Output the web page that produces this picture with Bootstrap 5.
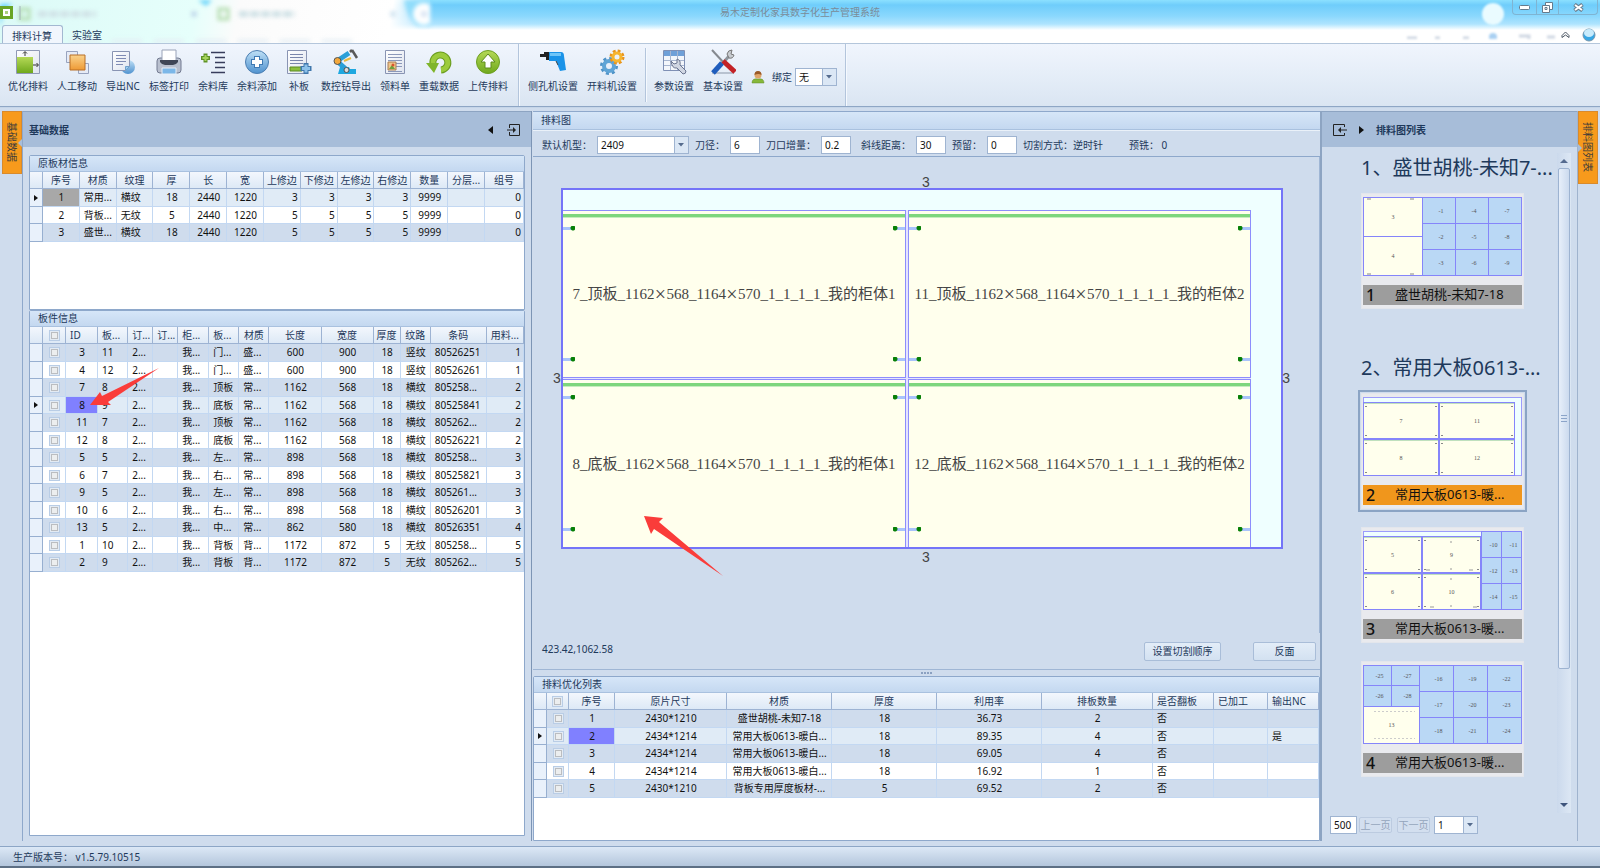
<!DOCTYPE html>
<html lang="zh-CN">
<head>
<meta charset="utf-8">
<meta name="viewport" content="width=device-width, initial-scale=1">
<title>易木定制化家具数字化生产管理系统</title>
<link href="https://cdn.jsdelivr.net/npm/bootstrap@5.3.0/dist/css/bootstrap.min.css" rel="stylesheet">
<style>
:root{--ink:#1e395b;--pane:#cfdced;--line:#8ea8cb;--head:#a7bdd9;--orange:#f79a1c}
body{font-family:"Noto Sans","Noto Sans CJK SC",sans-serif;font-size:10px;line-height:16px;color:var(--ink);background:var(--pane);height:100vh;min-height:700px;overflow:hidden}
button,input,select{font:inherit;color:inherit}
/* title bar */
.glass{height:43px;overflow:hidden;background:linear-gradient(180deg,#8be0ff 0,#6fcdfb 5px,#8ad8fd 16px,#aee4fe 24px,#fff 30px)}
.glass-haze{left:0;top:0;width:430px;height:43px;background:linear-gradient(100deg,#dcfaf7 0,#e6fffb 45%,#fbfbfb 55%,#fff 90%,transparent)}
.glass-haze svg{filter:blur(2px)}
.app-title{color:#7b8c99;line-height:24px}
.orb{width:22px;height:22px;border-radius:50%;background:#eafbff;filter:blur(1px)}
.win-btns{border:1px solid #7fb4d2;border-top:0;border-radius:0 0 4px 4px;height:15px}
.win-btns button{border:0;background:transparent;height:14px;padding:0;display:flex;align-items:center;justify-content:center}
.win-btns button+button{border-left:1px solid #7fb4d2}
.app-tabs{left:2px;bottom:0}
.app-tabs a{display:block;color:var(--ink);text-decoration:none;height:18px;line-height:20px;padding:0 10px 0 9px}
.app-tabs a.active{background:#f1f6fd;border:1px solid #a3b8d1;border-bottom:0;border-radius:3px 3px 0 0}
/* ribbon */
.ribbon{height:64px;background:linear-gradient(#f0f5fd,#e3ecf7 60%,#dae5f2);border-top:1px solid #b4c6db;border-bottom:1px solid #8ea6c5}
.tool{border:0;background:transparent;padding:5px 4px 0;height:62px;display:flex;flex-direction:column;align-items:center;min-width:34px;white-space:nowrap}
.tool svg{width:26px;height:26px;margin-bottom:3px}
.rule{width:1px;background:#b3c5dc;box-shadow:1px 0 #f5f9fe}
.rule.mid{margin:0 5px 0 6px}
/* workspace */
.work{min-height:0;padding:3px 0 5px;border-top:1px solid #c5d5e8}
.rail{width:22px}
.side-tab{width:20px;background:var(--orange);border:1px solid #d98a2b;padding:10px 0 11px;writing-mode:vertical-rl;text-orientation:sideways;line-height:18px;color:#3b3a3a;position:relative}
.side-tab::after{content:"";position:absolute;top:27px;border:4px solid transparent}
.side-tab.to-right::after{right:-1px;border-right-color:var(--head);border-left-width:0}
.side-tab.to-left::after{left:-1px;top:32px;border-left-color:var(--head);border-right-width:0}
.pane-left{width:510px;border-left:1px solid var(--line);border-right:1px solid #7d95b5}
.pane-right{width:258px;border-left:2px solid #8da4c2;border-right:1px solid #9fb3ce}
.pane-head{height:36px;background:var(--head);font-weight:700;border-top:1px solid #8da4c2}
.group{border:1px solid var(--line);border-radius:2px 2px 0 0;background:#fff}
.group-head{height:16px;line-height:15px;padding-left:8px;background:linear-gradient(#d6e6f8,#c4d8f0);border-bottom:1px solid #a9c1df}
.grp-stock{flex:0 0 155px}
/* data grids */
.grid{table-layout:fixed;width:100%;border-collapse:separate;border-spacing:0;color:#111}
.grid th,.grid td{padding:0 3px 0 4px;line-height:15px;white-space:nowrap;overflow:hidden;text-align:center;vertical-align:middle}
.grid th{height:17px;font-weight:400;color:var(--ink);padding:0 1px;background:linear-gradient(#f3f7fd,#dde9f6);border-right:1px solid #9db3d3;border-bottom:1px solid #9db3d3}
.grid td{height:18px;background:var(--pane);border-right:1px solid #c3d8f2;border-bottom:1px solid #c3d8f2}
.grid tr:nth-child(even) td{height:17px;background:#fff}
.grid tr.focused td{background:#e0ebf6}
.grid tbody td.mark-col{background:#e9f1fb;border-color:#97afd0;padding:0}
.grid td.l,.grid th.l{text-align:left;padding:0 0 0 4px}
.grid td.r{text-align:right;padding-right:2px}
.grid tbody td.pick{background:#8080ff}
.grid tbody td.pick-off{background:#a8a8a8}
.ptr{width:0;height:0;border:3px solid transparent;border-left:4px solid #111;border-right:0;margin:0 auto}
.tick{appearance:none;width:11px;height:11px;display:block;margin:0 auto;border:1px solid #b9cde6;background:#eceeef;box-shadow:inset 0 0 0 1px #e3ebf4,inset 0 0 0 2px #bbbdc0}
/* fields */
.field{border:1px solid #9fb4d1;background:#fff;color:#111;height:18px;padding:0 3px;border-radius:0}
.num{width:30px}
.drop{appearance:none;padding-right:16px;background:#fff url("data:image/svg+xml,%3Csvg xmlns='http://www.w3.org/2000/svg' width='14' height='18'%3E%3Cpath fill='%23dbe7f5' d='M0 0h14v18H0z'/%3E%3Cpath fill='%239fb4d1' d='M0 0h1v18H0z'/%3E%3Cpath fill='%23566c8e' d='M4 6h6l-3 3.500z'/%3E%3C/svg%3E") right top no-repeat}
.params{height:27px;padding:2px 0 0 9px;border-top:1px solid #eaf1f9;border-bottom:1px solid var(--line);gap:6px}
.params label{margin-right:5px}
.push{border:1px solid #a9bdd8;border-radius:2px;background:linear-gradient(#e3edf8,#d3e1f1);height:19px;padding:0;line-height:16px}
.push:disabled{color:#93a4bb;background:#d3dfef;border-color:#bccbe0;height:16px;line-height:13px;width:33px}
/* nesting drawing */
.chart{padding:31px 36px 0 28px;border-right:1px solid #9fb6d5;min-height:0}
.board{height:361px;border:2px solid #7474f8;background:#efffff;padding:20px 30px 0 0;position:relative}
.parts{display:grid;grid-template-columns:1fr 1fr;grid-template-rows:1fr 1fr;gap:1px 2px;height:100%;background:#e4e4ff}
.part{position:relative;background:#ffffed;border:1px solid #8d8dfc;border-left-width:0;font:15px/20px "Liberation Serif","Noto Sans CJK SC",serif;color:#444;display:flex;align-items:center;justify-content:center;white-space:nowrap;overflow:hidden}
.part:nth-child(even){border-left-width:1px}
.part:nth-child(n+3){border-bottom-width:0}
.part::before{content:"";position:absolute;left:0;right:0;top:3px;height:4px;background:#7dd67d;border-bottom:1px solid #c6ecbf}
.part i{display:inline-block;width:12px;text-align:center;font-style:normal;font-size:20px;line-height:16px;vertical-align:-2px}
.hole{position:absolute;width:12px;height:5px;background:radial-gradient(circle at 10px 2px,#078007 2px,transparent 3px),linear-gradient(#a9c3fb,#a9c3fb) 0 1px/9px 3px no-repeat}
.hole.e{right:0;transform:scaleX(-1)}.hole.w{left:0}.hole.n{top:15px}.hole.s{bottom:15px}
.trim{position:absolute;font:14px/16px "Liberation Sans",sans-serif;color:#444}
.trim.t{top:-16px;left:50%}.trim.b{bottom:-18px;left:50%}.trim.a{left:-10px;top:180px}.trim.z{right:-9px;top:180px}
.arrow{position:absolute;pointer-events:none;overflow:visible}
.foot{height:37px;padding:0 4px 0 9px;border-bottom:1px solid #9fb6d5}
.splitter{height:6px}
.splitter span{width:2px;height:2px;background:#8ba1c1}
.grp-list{flex:0 0 165px}
/* thumbnails */
.sheet-title{font-size:20px;line-height:24px;font-weight:400;padding-left:39px;margin:0;white-space:nowrap}
.sheet{width:163px;height:116px;margin:0 0 18px 39px;background:#e9eaee;border:1px solid #e3e6ec;padding:3px 1px;color:#111}
.sheet svg{display:block;margin:0 auto 8px;width:159px;height:80px}
.sheet text{font:6px "Liberation Serif",serif;fill:#555;text-anchor:middle}
.sheet figcaption{background:#9d9d9d;height:20px;line-height:19px;font-size:13px;display:grid;grid-template-columns:32px 1fr}
.sheet figcaption b{font-size:16px;line-height:20px;font-weight:500;padding-left:3px}
.sheet.on{outline:2px solid #8ba4c4;outline-offset:1px}
.sheet.on figcaption{background:#f0961c}
.scroll{width:14px;background:linear-gradient(90deg,#cbd9ec,#dce7f4);margin:6px 6px 0 0}
.thumb-bar{height:501px;width:12px;border:1px solid #9db3d1;border-radius:2px;background:linear-gradient(90deg,#e7effa,#cbdaee)}
.tri-u,.tri-d{border:4px solid transparent;height:0;width:0}
.tri-u{border-bottom:4px solid #556b8f;border-top:0}
.tri-d{border-top:4px solid #3f557c;border-bottom:0}
.pager{height:28px;padding:0 0 4px 8px}
.status{height:22px;border-top:1px solid #8da6c6;border-bottom:2px solid #5d6f84;background:linear-gradient(#dce8f6,#b4c6dc);padding-left:13px;line-height:21px}
</style>
</head>
<body class="d-flex flex-column">
<svg class="position-absolute" width="0" height="0" aria-hidden="true">
 <defs>
  <linearGradient id="gGreen" x2="0" y2="1"><stop stop-color="#b5d957"/><stop offset="1" stop-color="#6fa81c"/></linearGradient>
  <linearGradient id="gBlue" x2="0" y2="1"><stop stop-color="#bfe0f6"/><stop offset="1" stop-color="#4f92cf"/></linearGradient>
  <linearGradient id="gOr" x2="0" y2="1"><stop stop-color="#fad28b"/><stop offset="1" stop-color="#ee9a35"/></linearGradient>
  <linearGradient id="gPaper" x2="1" y2="1"><stop stop-color="#fff"/><stop offset="1" stop-color="#dfe4ef"/></linearGradient>
 </defs>
</svg>

<header class="glass position-relative flex-shrink-0">
 <div class="glass-haze position-absolute">
  <svg width="430" height="43">
   <path d="M0 28Q4 6 14 4H0z" fill="#66d3fb"/><path d="M198 0h14l-6 6z" fill="#66d3fb"/><path d="M404 0h26v26h-12q-10-6-14-26z" fill="#8fdcfb"/>
   <g fill="none" stroke="#b3dcae" stroke-width="3"><rect x="20" y="9" width="9" height="10"/><rect x="219" y="9" width="9" height="10"/></g>
   <path d="M38 14h58M239 14h56" stroke="#cfe1e6" stroke-width="6" stroke-dasharray="9 2"/><circle cx="194" cy="14" r="3" fill="#bfd6ea"/><circle cx="393" cy="14" r="3" fill="#cfe2f0"/>
   <path d="M70 41h290" stroke="#e4edf4" stroke-width="3" stroke-dasharray="30 12"/><circle cx="424" cy="14" r="11" fill="#fff"/><circle cx="424" cy="14" r="3" fill="#d3e0f2"/>
  </svg>
 </div>
 <svg class="position-absolute" style="left:0;top:6px" width="22" height="14"><path d="M0 0h13v13H0z" fill="#69a524"/><path d="M3 3h7v7H3z" fill="#fff"/><path d="M5 5h3v3H5z" fill="#a9cf7c"/><path d="M20 0v14" stroke="#a3b3ba"/></svg>
 <div class="app-title text-center position-relative">易木定制化家具数字化生产管理系统</div>
 <div class="position-absolute d-flex" style="right:2px;top:0">
  <div class="orb me-2" style="margin-top:3px"></div>
  <div class="win-btns d-flex">
   <button aria-label="最小化" style="width:23px"><svg width="11" height="6"><rect x=".5" y="1.500" width="10" height="4" rx="1" fill="#fff" stroke="#667b8c"/></svg></button>
   <button aria-label="还原" style="width:22px"><svg width="11" height="11" fill="#fff" stroke="#667b8c"><path d="M3.500.500h7v7h-7z"/><path d="M.500 3.500h7v7h-7z"/><path d="M3 5.500h2v2H3z"/></svg></button>
   <button aria-label="关闭" style="width:39px"><svg width="11" height="9"><path d="M1.500 1.500l8 6M9.500 1.500l-8 6" stroke="#667b8c" stroke-width="4"/><path d="M2 2l7 5M9 2L2 7" stroke="#fff" stroke-width="2"/></svg></button>
  </div>
 </div>
 <div class="position-absolute d-flex align-items-center" style="right:4px;bottom:1px">
  <svg width="150" height="8" style="filter:blur(1px)"><path d="M0 7h10M28 7h5M56 7h6M112 5h10v3M140 6h8" fill="none" stroke="#d0d8e3" stroke-width="3"/><circle cx="86" cy="6" r="4" fill="#a9d0f2"/></svg>
  <svg width="9" height="8" fill="none" stroke="#4b5663" style="margin:0 12px 0 4px"><path d="M1 4.500L4.500 1 8 4.500M1 4.500v2L4.500 4 8 6.500v-2"/></svg>
  <svg width="14" height="14"><circle cx="7" cy="7" r="6" fill="#38a7e5" stroke="#7795ab"/><ellipse cx="7" cy="5" rx="5" ry="4" fill="#c8ebfc"/></svg>
 </div>
 <nav class="app-tabs position-absolute d-flex"><a href="#" class="active">排料计算</a><a href="#">实验室</a></nav>
</header>

<div class="ribbon d-flex flex-shrink-0 ps-1">
 <div class="d-flex" style="gap:1px">
  <button class="tool"><svg viewBox="0 0 26 26"><path d="M1.500 1.500h23v23h-23z" fill="url(#gPaper)" stroke="#8f99b5"/><path d="M2 8h16v16H2z" fill="url(#gGreen)"/><path d="M10 7V3M8 4.500l2-2 2 2M18 16h5M21.500 14l2 2-2 2" fill="none" stroke="#333"/></svg>优化排料</button>
  <button class="tool"><svg viewBox="0 0 26 26"><path d="M2.500 2.500h11v11h-11zM14.500 14.500h10v10h-10z" fill="#e6ebf6" stroke="#98a3be"/><path d="M6 6h15v15H6z" fill="url(#gOr)" stroke="#b86e26"/></svg>人工移动</button>
  <button class="tool"><svg viewBox="0 0 26 26"><circle cx="18" cy="18" r="7" fill="url(#gBlue)"/><path d="M2.500 2.500h17v15l-4 4h-13z" fill="url(#gPaper)" stroke="#8994b3"/><path d="M6 6.500h10M6 9.500h10M6 12.500h10M6 15.500h7" stroke="#7f8bb4"/><path d="M15.500 21.500v-4h4z" fill="#9ccbee" stroke="#6f9fcb"/></svg>导出NC</button>
  <button class="tool"><svg viewBox="0 0 26 26"><path d="M1 12q0-3 3-3h18q3 0 3 3v9q0 3-3 3H4q-3 0-3-3z" fill="#b9c0cf" stroke="#737b91"/><path d="M6 1h14v11H6z" fill="#fff" stroke="#9aa3b8"/><path d="M4 11h18v2q-2 3-5 3H9q-3 0-5-3z" fill="#3f4657"/><path d="M6 19h14v6H6z" fill="#7cb7e8" stroke="#e9eff7"/></svg>标签打印</button>
  <button class="tool"><svg viewBox="0 0 26 26"><path d="M5.500 4.500v9M1 9h9" stroke="#5f9226" stroke-width="4"/><path d="M5.500 6v6M2.500 9h6" stroke="#a6d45c" stroke-width="2"/><path d="M11 3.500h14M15 8.500h10M15 13.500h10M15 18.500h10M11 23.500h14" stroke="#383d5c" stroke-width="1.600"/></svg>余料库</button>
  <button class="tool"><svg viewBox="0 0 26 26"><circle cx="13" cy="13" r="11.500" fill="url(#gBlue)" stroke="#4d7fb2"/><path d="M13 7v12M7 13h12" stroke="#3f7ab4" stroke-width="6"/><path d="M13 8v10M8 13h10" stroke="#fff" stroke-width="4"/></svg>余料添加</button>
  <button class="tool"><svg viewBox="0 0 26 26"><path d="M1.500 1.500h19v23h-19z" fill="url(#gPaper)" stroke="#8994b3"/><path d="M4 5.500h13M4 8.500h13M4 11.500h13M4 14.500h13" stroke="#7a86ac"/><path d="M4 18h12v4H4z" fill="#8abf3c" stroke="#5c8c22"/><path d="M20 14v11M14.500 19.500h11" stroke="#3f77ac" stroke-width="5"/><path d="M20 15.500v8M16 19.500h8" stroke="#8cc1ea" stroke-width="3"/></svg>补板</button>
  <button class="tool"><svg viewBox="0 0 26 26"><path d="M5 25l2-7h9l1 2h6v5z" fill="#1fa8e0"/><path d="M4 12l12-8M5 13l9 8" stroke="#2a9fd8" stroke-width="5"/><path d="M17 3l2-2M19 1l5 8" fill="none" stroke="#595959" stroke-width="2.500"/><circle cx="4.500" cy="12" r="3.500" fill="#f3a83b" stroke="#555"/><circle cx="13.500" cy="21" r="2.500" fill="#ddd" stroke="#555"/><path d="M11 12l7-3" stroke="#e9b93e" stroke-width="2"/></svg>数控钻导出</button>
  <button class="tool"><svg viewBox="0 0 26 26"><path d="M3.500 1.500h19v23h-19z" fill="url(#gPaper)" stroke="#8994b3"/><path d="M6 5.500h14M6 8.500h14M6 11.500h14M14 14.500h6M14 17.500h6M6 22.500h14" stroke="#8b98ba"/><path d="M6 13h8v8H6z" fill="#f0c58a" stroke="#a67d55"/><path d="M7 20l3-4 3 4z" fill="#6ba13c"/><circle cx="11" cy="16" r="1.500" fill="#d9542f"/></svg>领料单</button>
  <button class="tool"><svg viewBox="0 0 26 26"><path d="M7 15A7.500 7.500 0 1 1 15 21" fill="none" stroke="#6b9d21" stroke-width="7"/><path d="M7 15A7.500 7.500 0 1 1 15 21" fill="none" stroke="#9ccb3d" stroke-width="5"/><path d="M0 14h13L8 24z" fill="#7fb52a"/></svg>重载数据</button>
  <button class="tool"><svg viewBox="0 0 26 26"><circle cx="13" cy="13" r="11.500" fill="url(#gGreen)" stroke="#6c9f22"/><path d="M13 5l7 8h-4v6h-6v-6H6z" fill="#fff" stroke="#5e8c1c"/></svg>上传排料</button>
 </div>
 <div class="rule mid"></div>
 <div class="d-flex" style="gap:1px">
  <button class="tool"><svg viewBox="0 0 26 26"><path d="M0 5h4V3h6v8H6V8H0z" fill="#222"/><path d="M9 3h12q3 0 3 4l2 14-6 1-4-10H9z" fill="#1a93e8"/><path d="M10 4h11v3H10z" fill="#6fc5f8"/><path d="M16 12l2 4" stroke="#444"/></svg>侧孔机设置</button>
  <button class="tool"><svg viewBox="0 0 26 26" fill="none"><circle cx="10" cy="17" r="7.500" stroke="#4f93c7" stroke-width="3" stroke-dasharray="3 2.890"/><circle cx="10" cy="17" r="5" stroke="#5fa4d6" stroke-width="4"/><circle cx="18" cy="8" r="6" stroke="#e9941b" stroke-width="3" stroke-dasharray="2.700 2"/><circle cx="18" cy="8" r="4" stroke="#f6b530" stroke-width="3"/></svg>开料机设置</button>
 </div>
 <div class="rule my-1 mx-1"></div>
 <div class="d-flex" style="gap:1px">
  <button class="tool"><svg viewBox="0 0 26 26"><path d="M2.500 1.500h21v20h-21z" fill="#f3f6fb" stroke="#7f90b5"/><path d="M3 2h20v5H3z" fill="#6fa0d8"/><path d="M3 11.500h20M3 16.500h20M9.500 2v19M16.500 2v19" stroke="#a8b6d0"/><path d="M10 12l3 3 3-1v-4q4 1 3 6l6 6q0 3-3 3l-6-6q-5 1-6-7z" fill="#d0d6e2" stroke="#6b7590"/></svg>参数设置</button>
  <button class="tool"><svg viewBox="0 0 26 26"><path d="M2 24h22" stroke="#b8c2d0" stroke-width="2"/><path d="M2 1l12 13" stroke="#85898f" stroke-width="2"/><path d="M20 6l-8 9" stroke="#8e959d" stroke-width="3"/><path d="M17 5q1-4 5-4l-1 4 3 1q-1 4-5 3z" fill="#c8ccd1" stroke="#777"/><path d="M13 12l12 11" stroke="#c32226" stroke-width="5"/><path d="M12 14L3 24" stroke="#1f5dbd" stroke-width="5"/></svg>基本设置</button>
 </div>
 <div class="d-flex align-items-center ms-1 me-2 pt-1" style="gap:3px">
  <svg width="14" height="14" class="me-1"><path d="M1 13q0-5 6-4 6-1 6 4z" fill="#86b83a" stroke="#5e8a25" stroke-width=".5"/><circle cx="7" cy="5" r="3.500" fill="#e0a56b"/><path d="M3.500 5q0-4 3.500-4t3.500 4q-3-2-7 0z" fill="#9a5a28"/></svg>
  <label for="bind">绑定</label>
  <select id="bind" class="field drop" style="width:42px"><option>无</option></select>
 </div>
 <div class="rule"></div>
</div>

<main class="work d-flex flex-fill">
 <div class="rail flex-shrink-0"><div class="side-tab to-right" style="margin-left:2px">基础数据</div></div>
 <section class="pane-left d-flex flex-column flex-shrink-0">
  <div class="pane-head d-flex align-items-center flex-shrink-0" style="padding:0 11px 0 6px">
   <span class="me-auto">基础数据</span>
   <svg width="5" height="8" style="margin-right:14px"><path d="M5 0v8L0 4z" fill="#111"/></svg>
   <svg width="13" height="12" fill="none" stroke="#222"><path d="M2.500 4V.500h10v11h-10V8M0 6h8"/><path d="M6 3l3 3-3 3z" fill="#222" stroke="none"/></svg>
  </div>
  <div class="d-flex flex-column flex-fill" style="padding:8px 6px 5px;min-height:0">
   <div class="group grp-stock"><div class="group-head">原板材信息</div><table class="grid" id="stock"></table></div>
   <div class="group flex-fill position-relative"><div class="group-head">板件信息</div><table class="grid" id="items"></table>
    <svg class="arrow" style="left:60px;top:57px" width="70" height="40"><path d="M0 37L10 24l2 4L69 0 18 34l3 3z" fill="#fa3c3a"/></svg>
   </div>
  </div>
 </section>

 <section class="d-flex flex-column flex-fill" style="min-width:0;padding-left:1px">
  <div class="group-head flex-shrink-0" style="height:19px;border-top:1px solid #8ea8cb;line-height:17px">排料图</div>
  <form class="params d-flex align-items-center flex-shrink-0">
   <div class="d-flex align-items-center"><label for="m">默认机型：</label><select id="m" class="field drop" style="width:92px"><option>2409</option></select></div>
   <div class="d-flex align-items-center"><label for="p1">刀径：</label><input id="p1" class="field num" value="6"></div>
   <div class="d-flex align-items-center"><label for="p2">刀口增量：</label><input id="p2" class="field num" value="0.2"></div>
   <div class="d-flex align-items-center ms-1"><label for="p3">斜线距离：</label><input id="p3" class="field num" value="30"></div>
   <div class="d-flex align-items-center"><label for="p4">预留：</label><input id="p4" class="field num" value="0"></div>
   <span>切割方式：逆时针</span><span class="ms-3 ps-1">预铣： 0</span>
  </form>
  <div class="chart flex-fill position-relative">
   <div class="board">
    <span class="trim t">3</span><span class="trim b">3</span><span class="trim a">3</span><span class="trim z">3</span>
    <div class="parts" id="parts"></div>
   </div>
   <svg class="arrow" style="left:111px;top:358px" width="82" height="62"><path d="M0 1l19 2-4 4 64 54-69-47-3 5z" fill="#fa3c3a"/></svg>
  </div>
  <div class="foot d-flex align-items-center flex-shrink-0">
   <span class="me-auto pb-1">423.42,1062.58</span>
   <button class="push" style="width:77px;margin-right:32px">设置切割顺序</button><button class="push" style="width:63px">反面</button>
  </div>
  <div class="splitter d-flex justify-content-center align-items-center flex-shrink-0" style="gap:1px"><span></span><span></span><span></span><span></span></div>
  <div class="group grp-list"><div class="group-head">排料优化列表</div><table class="grid" id="plans"></table></div>
 </section>

 <section class="pane-right d-flex flex-column flex-shrink-0">
  <div class="pane-head d-flex align-items-center flex-shrink-0" style="padding-left:11px">
   <svg width="14" height="12" fill="none" stroke="#222"><path d="M11.500 3V.500H.500v11h11V9M6 6h8"/><path d="M8 3L5 6l3 3z" fill="#222" stroke="none"/></svg>
   <svg width="5" height="8" style="margin:0 12px"><path d="M0 0v8l5-4z" fill="#111"/></svg>
   <span>排料图列表</span>
  </div>
  <div class="d-flex flex-fill" style="min-height:0">
   <div class="flex-fill overflow-hidden" style="padding-top:9px" id="sheets"></div>
   <div class="scroll d-flex flex-column align-items-center flex-shrink-0" style="padding:6px 0">
    <div class="tri-u" style="margin-bottom:5px"></div>
    <div class="thumb-bar d-flex align-items-center justify-content-center flex-shrink-0 mb-auto"><svg width="6" height="7"><path d="M0 .500h6M0 3.500h6M0 6.500h6" stroke="#8ba4c9"/></svg></div>
    <div class="tri-d"></div>
   </div>
  </div>
  <div class="pager d-flex align-items-center flex-shrink-0">
   <input class="field" style="width:27px;margin-right:2px" value="500" aria-label="每页数量">
   <button class="push" style="margin-right:5px" disabled>上一页</button><button class="push" style="margin-right:4px" disabled>下一页</button>
   <select class="field drop" style="width:44px" aria-label="页码"><option>1</option></select>
  </div>
 </section>
 <div class="rail flex-shrink-0"><div class="side-tab to-left">排料图列表</div></div>
</main>
<footer class="status flex-shrink-0">生产版本号： v1.5.79.10515</footer>

<script src="https://cdn.jsdelivr.net/npm/bootstrap@5.3.0/dist/js/bootstrap.bundle.min.js"></script>
<script>
const tick = n => `<input type="checkbox" class="tick" aria-label="${n}">`;
/* cols: [title, width or 0 for auto, body alignment, header alignment] */
function grid(id, cols, rows, focus, pickCol, pickCls) {
  const cg = '<colgroup><col style="width:13px">' + cols.map(c => c[1] ? `<col style="width:${c[1]}px">` : '<col>').join('') + '</colgroup>';
  const th = '<th></th>' + cols.map(c => `<th class="${c[3] || ''}">${c[0] === '#' ? tick('全选') : c[0]}</th>`).join('');
  const tb = rows.map((r, i) => {
    const on = i === focus;
    return `<tr class="${on ? 'focused' : ''}"><td class="mark-col">${on ? '<div class="ptr"></div>' : ''}</td>` +
      r.split('|').map((v, j) => `<td class="${cols[j][2] || ''} ${on && j === pickCol ? pickCls : ''}">${v === '#' ? tick('选择第' + (i + 1) + '行') : v}</td>`).join('') + '</tr>';
  }).join('');
  document.getElementById(id).innerHTML = cg + `<thead><tr>${th}</tr></thead><tbody>${tb}</tbody>`;
}
grid('stock', [['序号',0],['材质',0,'l'],['纹理',0,'l'],['厚',0],['长',0],['宽',0],['上修边',0,'r'],['下修边',0,'r'],['左修边',0,'r'],['右修边',0,'r'],['数量',0],['分层...',0],['组号',39,'r']],
 ['1|常用...|横纹|18|2440|1220|3|3|3|3|9999||0','2|背板...|无纹|5|2440|1220|5|5|5|5|9999||0','3|盛世...|横纹|18|2440|1220|5|5|5|5|9999||0'], 0, 0, 'pick-off');
grid('items', [['#',23],['ID',32,'','l'],['板...',30,'l','l'],['订...',25,'l','l'],['订...',25,'l','l'],['柜...',31,'l','l'],['板...',30,'l','l'],['材质',30,'l'],['长度',52],['宽度',52],['厚度',27],['纹路',30],['条码',56,'l'],['用料...',37,'r','l']],
 ['#|3|11|2...||我...|门...|盛...|600|900|18|竖纹|80526251|1','#|4|12|2...||我...|门...|盛...|600|900|18|竖纹|80526261|1','#|7|8|2...||我...|顶板|常...|1162|568|18|横纹|805258...|2','#|8|9|2...||我...|底板|常...|1162|568|18|横纹|80525841|2','#|11|7|2...||我...|顶板|常...|1162|568|18|横纹|805262...|2','#|12|8|2...||我...|底板|常...|1162|568|18|横纹|80526221|2','#|5|5|2...||我...|左...|常...|898|568|18|横纹|805258...|3','#|6|7|2...||我...|右...|常...|898|568|18|横纹|80525821|3','#|9|5|2...||我...|左...|常...|898|568|18|横纹|805261...|3','#|10|6|2...||我...|右...|常...|898|568|18|横纹|80526201|3','#|13|5|2...||我...|中...|常...|862|580|18|横纹|80526351|4','#|1|10|2...||我...|背板|背...|1172|872|5|无纹|805258...|5','#|2|9|2...||我...|背板|背...|1172|872|5|无纹|805262...|5'], 3, 1, 'pick');
grid('plans', [['#',22],['序号',46],['原片尺寸',112],['材质',105],['厚度',105],['利用率',105],['排板数量',111],['是否翻板',61,'l','l'],['已加工',54,'l','l'],['输出NC',0,'l','l']],
 ['#|1|2430*1210|盛世胡桃-未知7-18|18|36.73|2|否||','#|2|2434*1214|常用大板0613-暖白...|18|89.35|4|否||是','#|3|2434*1214|常用大板0613-暖白...|18|69.05|4|否||','#|4|2434*1214|常用大板0613-暖白...|18|16.92|1|否||','#|5|2430*1210|背板专用厚度板材-...|5|69.52|2|否||'], 1, 1, 'pick');

document.getElementById('parts').innerHTML = [['7','顶板','1'],['11','顶板','2'],['8','底板','1'],['12','底板','2']].map(p =>
 `<div class="part"><span class="hole n w"></span><span class="hole n e"></span><span class="hole s w"></span><span class="hole s e"></span><span>${p[0]}_${p[1]}_1162<i>×</i>568_1164<i>×</i>570_1_1_1_1_我的柜体${p[2]}</span></div>`).join('');

/* part: [x, y, w, h, label, kind]; kind b = offcut, y = part, g = part with grooved edge */
const R = a => a.map(([x,y,w,h,t,k]) => `<rect x="${x}" y="${y}" width="${w}" height="${h}" fill="${k==='b'?'#bad8f5':'#ffffed'}" stroke="#8585fa"/>` +
  (k==='g' ? `<path d="M${x+.5} ${y+1}h${w-1}" stroke="#bfe0bd"/><path d="M${x+1.5} ${y+4}h2M${x+w-3.5} ${y+4}h2M${x+1.5} ${y+h-3}h2M${x+w-3.5} ${y+h-3}h2" stroke="#888"/>` : '') +
  `<text x="${x+w/2+(k==='b'?2:0)}" y="${y+h/2+2}">${t}</text>`).join('');
const offcuts = (xs, ys, names) => names.map((n, i) => { const c = Math.floor(i/(ys.length-1)), r = i%(ys.length-1); return [xs[c],ys[r],xs[c+1]-xs[c],ys[r+1]-ys[r],n,'b']; });
const T = [
 R([[.5,.5,59,39,'3','y'],[.5,39.5,59,39,'4','y'],...offcuts([59.5,92.5,125.5,158.5],[.5,26.5,52.5,78.5],['-1','-2','-3','-4','-5','-6','-7','-8','-9'])]) + '<path d="M4 2h4M47 2h4M4 77h4M47 77h4" stroke="#888"/>',
 '<rect x=".5" y=".5" width="158" height="78" fill="#efffff" stroke="#9c9cfb"/>' + R([[.5,5.5,75,36,'7','g'],[76.5,5.5,75,36,'11','g'],[.5,42.5,75,36,'8','g'],[76.5,42.5,75,36,'12','g']]),
 '<rect x=".5" y=".5" width="158" height="78" fill="#efffff" stroke="#9c9cfb"/>' + R([[.5,5.5,58,36,'5','g'],[59.5,5.5,58,36,'9','g'],[.5,42.5,58,36,'6','g'],[59.5,42.5,58,36,'10','g'],...offcuts([118.5,138.5,158.5],[.5,26.5,52.5,78.5],['-10','-12','-14','-11','-13','-15'])]) + '<path d="M87 11h2M87 38h2M87 48h2M87 75h2M63 39h4M106 39h4M67 76h4M110 76h4" stroke="#999"/>',
 R([...offcuts([.5,28.5,56.5],[.5,20.5,41.5],['-25','-26','-27','-28']),[.5,41.5,56,37,'13','y'],...offcuts([56.5,90.5,124.5,158.5],[.5,26.5,52.5,78.5],['-16','-17','-18','-19','-20','-21','-22','-23','-24'])]) + '<path d="M11 46.500h41M11 73.500h41" stroke="#ccc" stroke-dasharray="2 2"/>'
];
const card = (i, name) => `<figure class="sheet ${i===1?'on':''}"><svg viewBox="0 0 159 80">${T[i]}</svg><figcaption><b>${i+1}</b><span>${name}</span></figcaption></figure>`;
document.getElementById('sheets').innerHTML =
 '<h2 class="sheet-title" style="margin-bottom:13px">1、盛世胡桃-未知7-...</h2>' + card(0,'盛世胡桃-未知7-18') +
 '<h2 class="sheet-title" style="margin:47px 0 13px">2、常用大板0613-...</h2>' + card(1,'常用大板0613-暖...') + card(2,'常用大板0613-暖...') + card(3,'常用大板0613-暖...');
</script>
</body>
</html>
